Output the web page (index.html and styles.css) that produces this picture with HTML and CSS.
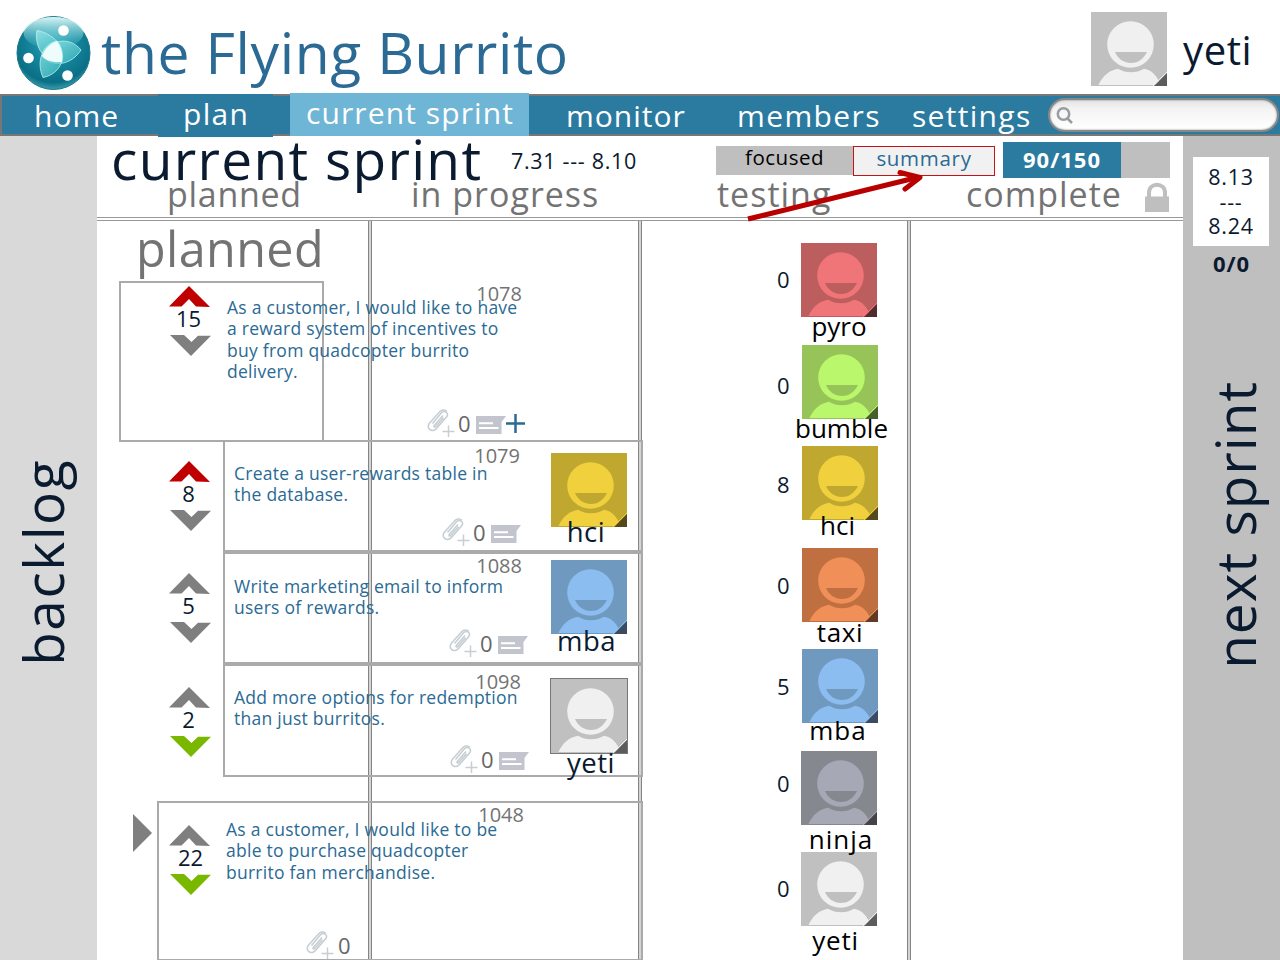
FILE: index.html
```
<!DOCTYPE html>
<html lang="en">
<head>
<meta charset="utf-8">
<title>the Flying Burrito</title>
<link rel="stylesheet" href="styles.css">
</head>
<body>
<svg class="defs" width="0" height="0">
  <defs>
    <symbol id="face" viewBox="0 0 76 74">
      <rect class="f-bg" width="76" height="74"/>
      <path class="f-fg" d="M7.500 73C12 63 19 58 27 56.700C35 61.500 45 61.500 53 56.700C61 58 66 64 70 73Z"/>
      <circle class="f-fg" cx="39.500" cy="32.500" r="23.300"/>
      <path class="f-bg" d="M24 40H56C52 48 46 51 40 51C33 51 27 47 24 40Z"/>
      <path class="f-edge" d="M62 74L76 60"/>
      <path class="f-corner" d="M63 74L76 61V74Z"/>
    </symbol>
    <symbol id="up" viewBox="0 0 42 21"><path d="M20 0L41 21L27 20.500L20 13L12.500 20.500H0Z"/></symbol>
    <symbol id="down" viewBox="0 0 42 21"><path d="M0 0H14L21.500 7L28 .7H41L21 21Z"/></symbol>
    <symbol id="clip" viewBox="0 0 28 28">
      <path d="M5.500 14.500L14.500 3.800C16 2 18.500 2 19.700 3.500C21 5 20.500 6.800 19.500 8L9.500 19.500C7.800 21.500 4.600 22.300 2.600 20.400C.7 18.500 1.300 15.700 2.600 14L12.700 2.700C14.500 .7 18 .2 19.800 2.200M16 6.500L7.300 16.500C6.500 17.600 7.500 18.600 8.600 17.700L16.500 8.800"/>
      <path class="c-plus" d="M21.500 16.500V28M15.500 22.500H27.500"/>
    </symbol>
    <symbol id="note" viewBox="0 0 30 18">
      <path fill="#c2c4ce" d="M0 0H30L25.500 6V18H0Z"/>
      <path stroke="#fff" stroke-width="2" d="M3 7.300H17M3 12H22.500"/>
    </symbol>
  </defs>
</svg>

<header class="top">
  <svg class="logo" viewBox="0 0 76 76">
    <defs>
      <radialGradient id="ball" cx=".5" cy=".35" r=".65"><stop offset="0" stop-color="#2ba9b9"/><stop offset=".5" stop-color="#14849a"/><stop offset=".85" stop-color="#0a6f86"/><stop offset="1" stop-color="#3a9dab"/></radialGradient>
      <linearGradient id="shine" x1="0" y1="0" x2="0" y2="1"><stop offset="0" stop-color="#e9fbfb" stop-opacity=".95"/><stop offset="1" stop-color="#5fd0d8" stop-opacity=".05"/></linearGradient>
      <linearGradient id="petal" x1="0" y1="0" x2="1" y2="1"><stop offset="0" stop-color="#9fe9e9"/><stop offset="1" stop-color="#35b9c0"/></linearGradient>
    </defs>
    <circle cx="38.500" cy="38" r="36.500" fill="url(#ball)" stroke="#16798c"/>
    <ellipse cx="38.500" cy="18" rx="30" ry="16" fill="url(#shine)"/>
    <g fill="url(#petal)" fill-opacity=".75" stroke="#baf4f1" stroke-width=".8">
      <path d="M22 15.500C37 18 51 31 47 47C30 48 19 33 22 15.500Z"/>
      <path d="M66 35C57 49 39 54 27 41C34 24 55 21 66 35Z"/>
      <path d="M28 62.500C21 47 27 29 42 26C53 41 46 59 28 62.500Z"/>
    </g>
    <path fill="#eefcfc" d="M27 41C30 33 36 28 42 26C47 33 48 40 47 47C39 48 31 46 27 41Z"/>
    <circle cx="48.500" cy="15.500" r="5.300" fill="#fff"/><circle cx="13.500" cy="43" r="5.300" fill="#fff"/><circle cx="52.500" cy="60.500" r="5.300" fill="#fff"/>
  </svg>
  <h1 class="brand">the Flying Burrito</h1>
  <svg class="face top-face gray"><use href="#face"/></svg>
  <span class="user">yeti</span>
</header>

<nav class="nav">
  <a class="tab home">home</a>
  <a class="tab plan">plan</a>
  <a class="tab current">current sprint</a>
  <a class="tab monitor">monitor</a>
  <a class="tab members">members</a>
  <a class="tab settings">settings</a>
  <div class="search"><svg viewBox="0 0 18 18"><circle cx="7.500" cy="7" r="5.700"/><path d="M11.500 11.500L16 16"/></svg></div>
</nav>

<div class="page">
  <aside class="side left"><span class="vertical backlog">backlog</span></aside>

  <main class="center">
    <div class="sprint">
      <h2 class="sprint-name">current sprint</h2>
      <span class="dates">7.31 --- 8.10</span>
      <span class="mode focused">focused</span>
      <span class="mode summary">summary</span>
      <span class="progress"><b>90/150</b></span>
      <svg class="arrow" viewBox="0 0 190 60"><path d="M8 50L175 9"/><path stroke-linecap="round" stroke-linejoin="round" d="M160 3.500L180 8.500L165 20"/></svg>
    </div>
    <div class="heads">
      <span class="h-planned">planned</span>
      <span class="h-progress">in progress</span>
      <span class="h-testing">testing</span>
      <span class="h-complete">complete</span>
      <svg class="lock" viewBox="0 0 24 30"><path fill="none" stroke="#bfbfbf" stroke-width="4" d="M4 15V11C4 0 20 0 20 11V15"/><path fill="#bfbfbf" d="M0 14.500H24V30H0Z"/></svg>
    </div>

    <div class="board">
      <div class="lanes"><i></i><i></i><i></i></div>

      <section class="stories">
        <h3 class="lane-title">planned</h3>

        <article class="story s1">
          <div class="frame"></div>
          <div class="votes"><svg class="red"><use href="#up"/></svg><span>15</span><svg><use href="#down"/></svg></div>
          <div class="body">
            <span class="id">1078</span>
            <p>As a customer, I would like to have<br>a reward system of incentives to<br>buy from quadcopter burrito<br>delivery.</p>
            <div class="tools"><svg class="clip"><use href="#clip"/></svg><span>0</span><svg class="note"><use href="#note"/></svg><svg class="plus" viewBox="0 0 19 19"><path d="M9.500 0V19M0 9.500H19"/></svg></div>
          </div>
        </article>

        <article class="story s2">
          <div class="frame"></div>
          <div class="votes"><svg class="red"><use href="#up"/></svg><span>8</span><svg><use href="#down"/></svg></div>
          <div class="body">
            <span class="id">1079</span>
            <p>Create a user-rewards table in<br>the database.</p>
            <div class="tools"><svg class="clip"><use href="#clip"/></svg><span>0</span><svg class="note"><use href="#note"/></svg></div>
          </div>
          <div class="owner"><svg class="face gold"><use href="#face"/></svg><span>hci</span></div>
        </article>

        <article class="story s3">
          <div class="frame"></div>
          <div class="votes"><svg><use href="#up"/></svg><span>5</span><svg><use href="#down"/></svg></div>
          <div class="body">
            <span class="id">1088</span>
            <p>Write marketing email to inform<br>users of rewards.</p>
            <div class="tools"><svg class="clip"><use href="#clip"/></svg><span>0</span><svg class="note"><use href="#note"/></svg></div>
          </div>
          <div class="owner"><svg class="face blue"><use href="#face"/></svg><span>mba</span></div>
        </article>

        <article class="story s4">
          <div class="frame"></div>
          <div class="votes"><svg><use href="#up"/></svg><span>2</span><svg class="green"><use href="#down"/></svg></div>
          <div class="body">
            <span class="id">1098</span>
            <p>Add more options for redemption<br>than just burritos.</p>
            <div class="tools"><svg class="clip"><use href="#clip"/></svg><span>0</span><svg class="note"><use href="#note"/></svg></div>
          </div>
          <div class="owner"><svg class="face gray outlined"><use href="#face"/></svg><span>yeti</span></div>
        </article>

        <article class="story s5">
          <div class="frame"></div>
          <svg class="expand" viewBox="0 0 19 38"><path d="M0 0L19 19L0 38Z"/></svg>
          <div class="votes"><svg><use href="#up"/></svg><span>22</span><svg class="green"><use href="#down"/></svg></div>
          <div class="body">
            <span class="id">1048</span>
            <p>As a customer, I would like to be<br>able to purchase quadcopter<br>burrito fan merchandise.</p>
            <div class="tools"><svg class="clip"><use href="#clip"/></svg><span>0</span></div>
          </div>
        </article>
      </section>

      <section class="team">
        <div class="member m1"><b>0</b><svg class="face rose"><use href="#face"/></svg><span>pyro</span></div>
        <div class="member shifted m2"><b>0</b><svg class="face lime"><use href="#face"/></svg><span>bumble</span></div>
        <div class="member shifted m3"><b>8</b><svg class="face gold"><use href="#face"/></svg><span>hci</span></div>
        <div class="member shifted m4"><b>0</b><svg class="face orange"><use href="#face"/></svg><span>taxi</span></div>
        <div class="member shifted m5"><b>5</b><svg class="face blue"><use href="#face"/></svg><span>mba</span></div>
        <div class="member m6"><b>0</b><svg class="face slate"><use href="#face"/></svg><span>ninja</span></div>
        <div class="member m7"><b>0</b><svg class="face gray"><use href="#face"/></svg><span>yeti</span></div>
      </section>
    </div>
  </main>

  <aside class="side right">
    <div class="next-dates"><span>8.13</span><span>---</span><span>8.24</span></div>
    <b class="next-points">0/0</b>
    <span class="vertical next">next sprint</span>
  </aside>
</div>
</body>
</html>
```
FILE: styles.css
```
* { box-sizing: border-box; margin: 0; padding: 0; }
body {
  width: 1280px; height: 960px; overflow: hidden;
  display: flex; flex-direction: column;
  background: #fff; color: #0a1a2f;
  font-family: "Open Sans", "Noto Sans", sans-serif; font-weight: 400;
}
h1, h2, h3 { font-weight: inherit; }
svg { display: block; flex: none; overflow: visible; }
.defs { position: absolute; }
span, h1, h2, h3, a { white-space: nowrap; }

/* header */
.top { height: 94px; flex: none; display: flex; align-items: flex-start; }
.logo { width: 76px; height: 76px; margin: 15px 0 0 15px; }
.brand { flex: none; width: 990px; margin-left: 10px; padding-top: 22px; font-size: 57px; line-height: 60px; color: #2a6a94; letter-spacing: .6px; }
.top-face { margin-top: 12px; }
.user { margin: 27px 0 0 16px; font-size: 40px; line-height: 46px; letter-spacing: .6px; }

/* avatars */
.face { width: 76px; height: 74px; --bg: #c0c0c0; --fg: #f0f0f0; --corner: #5c5c5c; }
.f-bg { fill: var(--bg); }
.f-fg { fill: var(--fg); }
.f-corner { fill: var(--corner); }
.f-edge { stroke: var(--fg); stroke-width: 1; }
.gold { --bg: #c0a830; --fg: #f0d03c; --corner: #54491c; }
.blue { --bg: #7099c0; --fg: #8cbdf0; --corner: #3c4c60; }
.rose { --bg: #bd5e5e; --fg: #f07578; --corner: #502c2c; }
.lime { --bg: #96c459; --fg: #baf76c; --corner: #46602c; }
.orange { --bg: #c07040; --fg: #f09058; --corner: #603c24; }
.slate { --bg: #868890; --fg: #a6a8b6; --corner: #444448; }
.outlined { outline: 1px solid #777; }

/* navigation */
.nav { height: 42px; flex: none; display: flex; background: #2b7a9f; border: 2px solid #777; border-right: 0; }
.tab { height: 38px; color: #fff; font-size: 30px; line-height: 39px; letter-spacing: 1px; flex: none; }
.home { width: 156px; padding-left: 32px; }
.plan { width: 115px; height: 43px; margin: -2px 17px 0 0; padding-left: 25px; background: #2b7a9f; letter-spacing: 1.300px; }
.current { width: 239px; height: 43px; margin-top: -3px; padding-left: 16px; background: #6fb5d6; letter-spacing: 1.100px; }
.monitor { width: 171px; padding-left: 37px; }
.members { width: 200px; padding-left: 37px; letter-spacing: 1.400px; }
.settings { width: 148px; padding-left: 12px; letter-spacing: 1.300px; }
.search { width: 231px; height: 34px; margin-top: 2px; padding: 9px; border: 2px solid #888; border-radius: 17px; background: linear-gradient(#e4e4e4, #f4f4f4 30%, #fff); box-shadow: inset 0 0 2px #777; }
.search svg { width: 18px; height: 18px; margin-top: -2px; margin-left: -3px; fill: none; stroke: #999da1; stroke-width: 2.500; }

/* page columns */
.page { flex: 1; min-height: 0; display: grid; grid-template-columns: 97px 1086px 97px; }
.side { display: flex; flex-direction: column; align-items: center; }
.left { background: #d9d9d9; }
.right { background: #bfbfbf; }
.vertical { writing-mode: vertical-rl; transform: rotate(180deg); font-size: 55px; line-height: 60px; letter-spacing: 1.500px; }
.backlog { margin: 323px 12px 0 0; }
.next { margin: 101px 0 0 6px; letter-spacing: 1px; }
.next-dates { width: 76px; height: 89px; margin: 21px 1px 0 0; padding-top: 8px; background: #fff; display: flex; flex-direction: column; align-items: center; }
.next-dates span { font-size: 21.500px; line-height: 24.500px; letter-spacing: .7px; }
.next-points { font-size: 22px; line-height: 34px; font-weight: 700; letter-spacing: 1px; }

/* sprint bar */
.center { min-width: 0; display: flex; flex-direction: column; }
.sprint { position: relative; height: 46px; display: flex; align-items: flex-start; }
.sprint-name { width: 401px; padding-left: 14px; font-size: 55px; line-height: 60px; margin-top: -7px; letter-spacing: 1.300px; }
.dates { width: 204px; margin-left: 13px; padding-top: 10px; font-size: 21.500px; line-height: 30px; letter-spacing: .7px; }
.mode { margin-top: 10px; height: 29px; font-size: 20.500px; line-height: 23px; text-align: center; }
.focused { width: 137px; margin-left: 1px; background: #bfbfbf; color: #000; letter-spacing: .5px; }
.summary { width: 142px; height: 30px; background: #f1f1f1; border: 1px solid #c41418; color: #2a6a94; letter-spacing: .7px; }
.progress { width: 167px; height: 36px; margin: 6px 0 0 8px; background: linear-gradient(90deg, #2b7a9f 118px, #bfbfbf 118px); }
.progress b { display: block; width: 118px; text-align: center; color: #fff; font-size: 22px; line-height: 35px; font-weight: 700; letter-spacing: 1px; }
.arrow { position: absolute; left: 643px; top: 33px; width: 190px; height: 60px; fill: none; stroke: #b90000; stroke-width: 5; z-index: 2; }

/* column headings */
.heads { height: 39px; padding-bottom: 4px; flex: none; display: flex; font-size: 34px; line-height: 24px; color: #737373; border-bottom: 4px double #999; letter-spacing: 1px; }
.heads span { flex: none; }
.h-planned { width: 314px; padding-left: 70px; letter-spacing: .7px; }
.h-progress { width: 306px; }
.h-testing { width: 249px; }
.h-complete { width: 179px; }
.lock { width: 24px; height: 30px; }

/* board: lane rules underneath, stories and team above */
.board { flex: 1; min-height: 0; display: grid; grid-template: 739px / 546px 540px; }
.lanes { grid-area: 1 / 1 / 2 / 3; display: flex; gap: 265.500px; padding-left: 271px; }
.lanes i { width: 4px; background: #d4d4d4; border: solid #858585; border-width: 0 1px; }
.stories { grid-area: 1 / 1; }
.lane-title { height: 60px; padding-left: 39px; font-size: 48.500px; line-height: 55px; color: #737373; letter-spacing: .4px; }

.story { position: relative; display: grid; grid-template-columns: 72px 54px 326px 94px; }
.frame { grid-area: 1 / 1 / 2 / 5; margin-left: 126px; border: 2px solid #aaa; }
.votes { grid-area: 1 / 2; display: flex; flex-direction: column; align-items: center; width: 42px; font-size: 22px; padding-top: var(--v); }
.votes svg { width: 42px; height: 21px; fill: #7f7f7f; }
.votes svg:last-child { margin-left: 2px; }
.votes .red { fill: #c00000; }
.votes .green { fill: #7ab800; }
.votes span { height: 28px; line-height: 22px; margin-left: -3px; }
.body { grid-area: 1 / 3; display: grid; grid-template-rows: var(--t) var(--k) 0; }
.id { font-size: 20px; line-height: 17px; color: #737373; width: var(--idr, 299px); text-align: right; padding-top: var(--i); }
.body p { font-size: 17.500px; line-height: 21.500px; color: #2a6a94; letter-spacing: .26px; white-space: nowrap; padding-left: var(--x, 11px); }
.tools { display: flex; padding-left: var(--c); height: 28px; }
.tools .clip { width: 28px; height: 28px; fill: none; stroke: #c6ced3; stroke-width: 1.500; }
.tools .c-plus { stroke-width: 2; }
.tools span { width: 21px; padding-left: 3px; font-size: 22px; line-height: 28px; color: #666; }
.note { width: 30px; height: 18px; margin-top: 7px; }
.plus { width: 19px; height: 19px; margin: 5px 0 0; stroke: #2a6a94; stroke-width: 2.500; }
.owner { grid-area: 1 / 4; width: 76px; margin-left: 2px; padding-top: var(--a); display: grid; grid-template-rows: var(--n) 0; justify-items: center; }
.owner span { font-size: 27.500px; line-height: 20px; letter-spacing: .5px; }

.s1 { height: 159px; --v: 5px; --t: 15.500px; --k: 112.500px; --i: 4px; --c: 204px; --x: 4px; }
.s1 .frame { margin: 0 319px -2px 22px; }
.s2 { height: 112px; --v: 21px; --t: 22.500px; --k: 55.500px; --i: 7px; --c: 219px; --idr: 297px; --a: 13px; --n: 69px; }
.s2 .owner span { margin-left: -6px; }
.s3 { height: 112px; --v: 21px; --t: 23.500px; --k: 53.500px; --i: 5px; --c: 226px; --a: 8px; --n: 71px; }
.s3 .owner span { margin-left: -5px; }
.s4 { height: 113px; --v: 23px; --t: 22.500px; --k: 58.500px; --i: 9px; --c: 227px; --idr: 298px; --a: 15px; --n: 74px; }
.s4 .owner span { margin-left: 4px; }
.s5 { height: 160px; margin-top: 24px; --v: 24px; --t: 17.500px; --k: 112px; --i: 5px; --c: 83px; --x: 3px; --idr: 301px; }
.s5 .frame { margin-left: 60px; }
.s5 .votes span { margin-left: 1px; }
.s5 .tools span { padding-left: 4px; }
.expand { grid-area: 1 / 1; width: 19px; height: 38px; margin: 13px 0 0 36px; fill: #7f7f7f; }

/* team totals */
.team { grid-area: 1 / 2; padding: 22px 0 0 133px; display: grid; grid-template-rows: repeat(7, 101.500px); }
.member { display: grid; grid-template: 74px 27px / 25px 76px; justify-items: center; }
.member b { font-size: 22px; font-weight: 400; line-height: 72px; justify-self: start; padding: var(--d, 0) 0 0 1px; height: 74px; }
.member span { position: relative; z-index: 1; grid-column: 2; font-size: 26px; line-height: 19px; color: #000; letter-spacing: 0; margin-left: var(--s, 0); padding-top: var(--u, 0); height: 27px; }
.shifted { grid-template-columns: 26px 76px; }
.m2 { --d: 4px; --s: 3px; }
.m3 { --d: 2px; --s: -5px; }
.m3 span { margin-top: -4px; }
.m4 { --d: 1px; --u: 1px; }
.m4 span { letter-spacing: .6px; }
.m5 { --d: 1px; --s: -4px; }
.m5 span { margin-top: -2px; letter-spacing: 1px; }
.m6 { --u: 5px; --s: 4px; }
.m6 b { margin-top: -4px; }
.m6 span { letter-spacing: 1px; }
.m7 { --u: 5px; --s: -7px; }
.m7 span { letter-spacing: .8px; }
```
